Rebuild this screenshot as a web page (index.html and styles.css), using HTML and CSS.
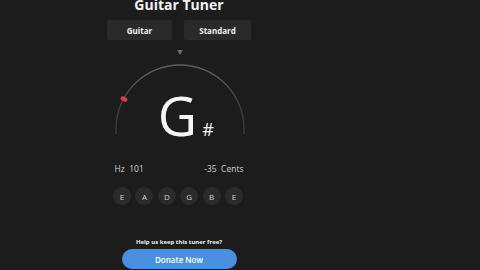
FILE: index.html
```html
<!DOCTYPE html>
<html>
<head>
<meta charset="utf-8">
<link rel="stylesheet" href="styles.css">
</head>
<body>
<main class="tuner">
  <h1 class="title">Guitar Tuner</h1>
  <div class="selectors">
    <div class="select select-instrument">Guitar</div>
    <div class="select select-tuning">Standard</div>
  </div>
  <div class="dial">
    <svg class="dial-svg" width="140" height="105" viewBox="0 0 140 105">
      <defs>
        <linearGradient id="arcg" x1="0" y1="0" x2="1" y2="0">
          <stop offset="0" stop-color="#3a3a3a"/>
          <stop offset="0.2" stop-color="#5a5a5a"/>
          <stop offset="0.5" stop-color="#5e5e5e"/>
          <stop offset="0.8" stop-color="#5a5a5a"/>
          <stop offset="1" stop-color="#3a3a3a"/>
        </linearGradient>
      </defs>
      <path d="M67 5 L73 5 L70 10 Z" fill="#6a6a6a"/>
      <path d="M6.2 89 A64 64 0 1 1 133.8 89" fill="none" stroke="url(#arcg)" stroke-width="1.4"/>
      <ellipse cx="14" cy="54" rx="3.6" ry="2.4" transform="rotate(28 14 54)" fill="#d6424a"/>
    </svg>
    <div class="note"><span class="note-letter">G</span><span class="note-acc">#</span></div>
  </div>
  <div class="readout">
    <span class="hz">Hz&nbsp;&nbsp;101</span>
    <span class="cents">-35&nbsp;&nbsp;Cents</span>
  </div>
  <div class="strings">
    <span class="string">E</span>
    <span class="string">A</span>
    <span class="string">D</span>
    <span class="string">G</span>
    <span class="string">B</span>
    <span class="string">E</span>
  </div>
  <p class="help">Help us keep this tuner free?</p>
  <div class="donate">Donate Now</div>
</main>
</body>
</html>
```
FILE: styles.css
```css
html, body {
  margin: 0;
  padding: 0;
  background: #1c1c1c;
  width: 480px;
  height: 270px;
  overflow: hidden;
}
.tuner {
  width: 358px;
  display: flex;
  flex-direction: column;
  align-items: center;
  font-family: "Open Sans", "Liberation Sans", sans-serif;
  color: #e6e6e6;
}
.title {
  margin: -4px 0 0 0;
  font-size: 14px;
  line-height: 18px;
  font-weight: 700;
  color: #f2f2f2;
}
.selectors {
  display: flex;
  gap: 12px;
  margin-top: 6px;
}
.select {
  height: 20px;
  background: #2a2a2a;
  border-radius: 2px;
  font-size: 8px;
  font-weight: 700;
  color: #f0f0f0;
  display: flex;
  align-items: center;
  justify-content: center;
}
.select-instrument { width: 65px; }
.select-tuning { width: 67px; }
.dial {
  position: relative;
  width: 140px;
  height: 105px;
  margin-top: 5px;
  margin-left: 2px;
}
.dial-svg {
  position: absolute;
  left: 0;
  top: 0;
}
.note {
  position: relative;
  display: flex;
  align-items: baseline;
  justify-content: center;
  padding-top: 40px;
  padding-left: 12px;
  color: #f4f4f4;
}
.note-letter {
  font-size: 54px;
  line-height: 60px;
  font-weight: 400;
}
.note-acc {
  font-size: 18px;
  margin-left: 5px;
  width: 12px;
}
.readout {
  width: 129px;
  display: flex;
  justify-content: space-between;
  margin-top: 14px;
  font-size: 8.5px;
  line-height: 10px;
  color: #d0d0d0;
}
.strings {
  display: flex;
  gap: 4.4px;
  margin-top: 13px;
  margin-left: -2px;
}
.string {
  width: 18px;
  height: 18px;
  border-radius: 50%;
  background: #2b2b2b;
  display: flex;
  align-items: center;
  justify-content: center;
  font-size: 8px;
  color: #d4d4d4;
}
.help {
  margin: 33px 0 0 0;
  font-size: 6px;
  line-height: 8px;
  font-weight: 700;
  color: #f0f0f0;
}
.donate {
  margin-top: 3px;
  width: 115px;
  height: 20px;
  border-radius: 10px;
  background: #4a8ee0;
  color: #ffffff;
  font-size: 8px;
  font-weight: 600;
  display: flex;
  align-items: center;
  justify-content: center;
}
```
